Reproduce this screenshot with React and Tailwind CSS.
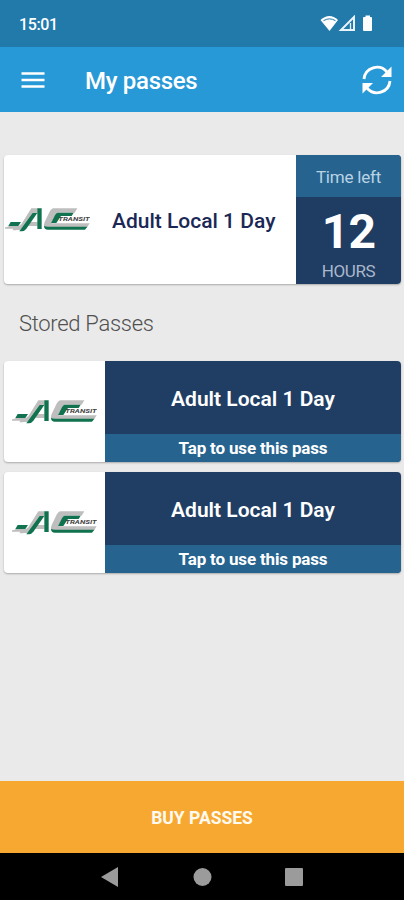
function TransitLogo() {
  return (
    <svg className="block h-6 w-[85px] shrink-0" viewBox="0 0 255 72" aria-label="AC Transit">
      <g fill="#bebebe">
        <path d="M79 1H98V16H88L60 62H38L45 50H48Z" />
        <path d="M12 54H54L46 66H32L36 60H0Z" />
        <path d="M0 58H40L34 67H22L25 62H0Z" />
        <path d="M68 42H98V54H61Z" />
        <path d="M146 1H217L209 14H158L141 40Q137 46 143 46H254L245 60H131Q111 60 119 42L133 13Q139 1 146 1Z" />
      </g>
      <g fill="#10724f">
        <path d="M17 42H48L40 54H10Z" />
        <path d="M83 15H97L64 62Q58 70 50 70H43Z" />
        <path d="M97 1H110V63H97Z" />
        <path d="M158 14H206L200 24H168L154 45H138L150 22Q154 14 158 14Z" />
        <path d="M117 53Q121 56 130 56H247L240 65H129Q117 65 117 53Z" />
      </g>
      <text x="160" y="38" fontFamily="Roboto, sans-serif" fontSize="17" fontWeight="700" fontStyle="italic" fill="#444" textLength="94" lengthAdjust="spacingAndGlyphs">TRANSIT</text>
    </svg>
  );
}

function StoredPass() {
  return (
    <div className="flex h-[101px] overflow-hidden rounded bg-white shadow-[0_1px_2px_rgba(0,0,0,0.28)]">
      <div className="flex w-[101px] items-center pl-2">
        <TransitLogo />
      </div>
      <div className="flex flex-1 flex-col bg-[#203e64] text-center font-bold text-white">
        <div className="flex h-[73px] items-center justify-center pt-1 text-[21px] font-semibold">Adult Local 1 Day</div>
        <div className="flex flex-1 items-center justify-center bg-[#26648f] pt-0.5 text-[17px] tracking-[-0.16px]">Tap to use this pass</div>
      </div>
    </div>
  );
}

export default function App() {
  return (
    <div className="flex h-[900px] w-[404px] flex-col overflow-hidden bg-[#eaeaea] font-[Roboto,sans-serif]">
      <div className="flex h-[47px] shrink-0 items-center justify-between bg-[#227aaa] pl-[19px] pr-[30px] pt-px text-white">
        <span className="pt-0.5 text-base font-medium tracking-[-0.4px]">15:01</span>
        <svg className="h-[18px] w-[54px]" viewBox="0 0 54 18" fill="none">
          <path d="M.5 5Q9.500-3 18 5L9.500 16Z" fill="#fff" />
          <path d="M3.500 5.700Q9.500 2 15.500 5.700" stroke="#227aaa" strokeWidth="1" />
          <path d="M34 2V15H21Z" stroke="#e8f3fa" strokeWidth="2" />
          <path d="M30.500 8V15" stroke="#e8f3fa" strokeWidth="1.300" />
          <path d="M43 3Q43 2 44 2H45.500V.5H50V2H51Q52 2 52 3V15Q52 16 51 16H44Q43 16 43 15Z" fill="#fff" />
        </svg>
      </div>
      <header className="flex h-[65px] shrink-0 items-center bg-[#2899d7] text-white">
        <svg className="ml-[21px] h-4 w-6" viewBox="0 0 24 16" fill="none" stroke="#fff" strokeWidth="2.300">
          <path d="M.5 1.500H23.500M.5 8H23.500M.5 14.500H23.500" />
        </svg>
        <h1 className="ml-10 pt-0.5 text-[24px] font-medium tracking-[-0.3px]">My passes</h1>
        <svg className="ml-auto mr-3 h-[30px] w-[30px]" viewBox="0 0 30 30" fill="none">
          <path d="M2 14A13 13 0 0 1 25 7M28 16A13 13 0 0 1 5 23" stroke="#fff" strokeWidth="2.800" />
          <path d="M29.500 1.500V12H19ZM.5 28.500V18H11Z" fill="#fff" />
        </svg>
      </header>

      <main className="flex flex-1 flex-col pl-1 pr-[3px] pt-[43px]">
        <section className="flex h-[129px] overflow-hidden rounded bg-white shadow-[0_1px_2px_rgba(0,0,0,0.28)]">
          <div className="flex flex-1 items-center pl-px">
            <TransitLogo />
            <div className="flex-1 pl-[22px] pt-1 text-[21px] font-medium text-[#1b2856]">Adult Local 1 Day</div>
          </div>
          <div className="flex w-[105px] flex-col bg-[#1f3c63] text-center">
            <div className="flex h-[42px] items-center justify-center bg-[#26648f] pt-[3px] text-[17px] tracking-[-0.2px] text-[#b9d3e5]">Time left</div>
            <div className="h-[66px] text-[48px] leading-[69px] font-bold tracking-[-0.8px] text-white">12</div>
            <div className="text-[17px] leading-[17px] tracking-[-0.4px] text-[#aab7cb]">HOURS</div>
          </div>
        </section>
        <h2 className="ml-[15px] mt-[25px] h-[52px] text-[22px] leading-[30px] font-light tracking-[-0.3px] text-[#505050]">Stored Passes</h2>
        <div className="flex flex-col gap-[10px]">
          <StoredPass />
          <StoredPass />
        </div>
      </main>

      <button className="h-[72px] shrink-0 bg-[#f7a831] pt-0.5 text-[17.5px] font-bold text-[#fffaf0]">BUY PASSES</button>
      <nav className="flex h-[47px] shrink-0 justify-center bg-black">
        <svg className="h-[47px] w-[202px]" viewBox="0 0 202 47" fill="#9b9b9b">
          <path d="M0 24L17 14V34Z" />
          <circle cx="101.500" cy="24" r="9" />
          <rect x="184" y="15" width="18" height="18" rx="1" />
        </svg>
      </nav>
    </div>
  );
}
